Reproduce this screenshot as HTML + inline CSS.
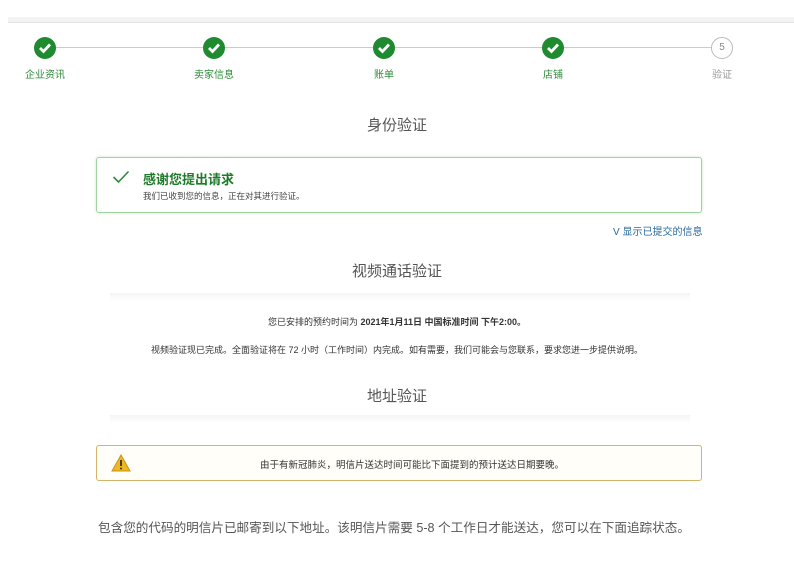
<!DOCTYPE html>
<html><head><meta charset="utf-8">
<style>
*{margin:0;padding:0;box-sizing:border-box}
body{width:794px;height:565px;background:#fff;font-family:"Liberation Sans","Noto Sans CJK SC",sans-serif;position:relative;overflow:hidden;color:#333}
.abs{position:absolute}
.bar{left:8px;top:17px;width:786px;height:6px;background:#f3f3f3;border-bottom:1px solid #e2e2e2}
.line{top:47px;height:1px;background:#ccc}
.dot{width:22px;height:22px;border-radius:50%;background:#1f8a2f;top:37px}
.dot svg{position:absolute;left:4px;top:5px}
.lbl{top:66px;font-size:10px;color:#2f8a3a;text-align:center;width:80px}
.h{font-size:15px;color:#555;text-align:center;width:794px;left:0}
.sh{left:110px;width:580px;height:8px;background:linear-gradient(#f4f4f4,#fff)}
</style></head><body>
<div class="abs bar"></div>
<div class="abs line" style="left:45px;width:677px"></div>
<div class="abs dot" style="left:34px"><svg width="14" height="12" viewBox="0 0 14 12"><path d="M2 6l3.5 3.5L12 2.5" stroke="#fff" stroke-width="2.8" fill="none"/></svg></div>
<div class="abs dot" style="left:203px"><svg width="14" height="12" viewBox="0 0 14 12"><path d="M2 6l3.5 3.5L12 2.5" stroke="#fff" stroke-width="2.8" fill="none"/></svg></div>
<div class="abs dot" style="left:373px"><svg width="14" height="12" viewBox="0 0 14 12"><path d="M2 6l3.5 3.5L12 2.5" stroke="#fff" stroke-width="2.8" fill="none"/></svg></div>
<div class="abs dot" style="left:542px"><svg width="14" height="12" viewBox="0 0 14 12"><path d="M2 6l3.5 3.5L12 2.5" stroke="#fff" stroke-width="2.8" fill="none"/></svg></div>
<div class="abs" style="left:711px;top:37px;width:22px;height:22px;border-radius:50%;border:1px solid #bbb;background:#fff;font-size:10px;color:#888;text-align:center;line-height:20px">5</div>
<div class="abs lbl" style="left:5px">企业资讯</div>
<div class="abs lbl" style="left:174px">卖家信息</div>
<div class="abs lbl" style="left:344px">账单</div>
<div class="abs lbl" style="left:513px">店铺</div>
<div class="abs lbl" style="left:682px;color:#999">验证</div>

<div class="abs h" style="top:114px">身份验证</div>
<div class="abs" style="left:96px;top:157px;width:606px;height:56px;border:1px solid #9fd39f;border-radius:3px;box-shadow:0 0 3px #cfe8cf"></div>
<svg class="abs" style="left:112px;top:170px" width="18" height="14" viewBox="0 0 18 14"><path d="M1.5 7l5 5L16.5 1.5" stroke="#2f8a3a" stroke-width="1.6" fill="none"/></svg>
<div class="abs" style="left:143px;top:169px;font-size:13px;font-weight:bold;color:#1e7a2a">感谢您提出请求</div>
<div class="abs" style="left:143px;top:190px;font-size:8.5px;color:#444">我们已收到您的信息，正在对其进行验证。</div>
<div class="abs" style="left:613px;top:223px;font-size:10px;color:#2a6a9a">V 显示已提交的信息</div>

<div class="abs h" style="top:260px">视频通话验证</div>
<div class="abs sh" style="top:293px"></div>
<div class="abs" style="left:0;width:794px;top:315px;text-align:center;font-size:9px;color:#333">您已安排的预约时间为 <b>2021年1月11日 中国标准时间 下午2:00。</b></div>
<div class="abs" style="left:0;width:794px;top:343px;text-align:center;font-size:9px;color:#333">视频验证现已完成。全面验证将在 72 小时（工作时间）内完成。如有需要，我们可能会与您联系，要求您进一步提供说明。</div>
<div class="abs h" style="top:385px">地址验证</div>
<div class="abs sh" style="top:415px"></div>

<div class="abs" style="left:96px;top:445px;width:606px;height:36px;border:1px solid #d3b46a;border-radius:3px;background:#fffef9"></div>
<svg class="abs" style="left:111px;top:454px" width="20" height="18" viewBox="0 0 20 18"><path d="M10 1L19 17H1Z" fill="#f0b820" stroke="#c8901a" stroke-width="1"/><path d="M10 6v6" stroke="#333" stroke-width="1.8"/><circle cx="10" cy="14.5" r="1" fill="#333"/></svg>
<div class="abs" style="left:260px;top:457px;font-size:9.5px;color:#333">由于有新冠肺炎，明信片送达时间可能比下面提到的预计送达日期要晚。</div>

<div class="abs" style="left:98px;top:517px;font-size:12.6px;color:#555">包含您的代码的明信片已邮寄到以下地址。该明信片需要 5-8 个工作日才能送达，您可以在下面追踪状态。</div>
</body></html>
